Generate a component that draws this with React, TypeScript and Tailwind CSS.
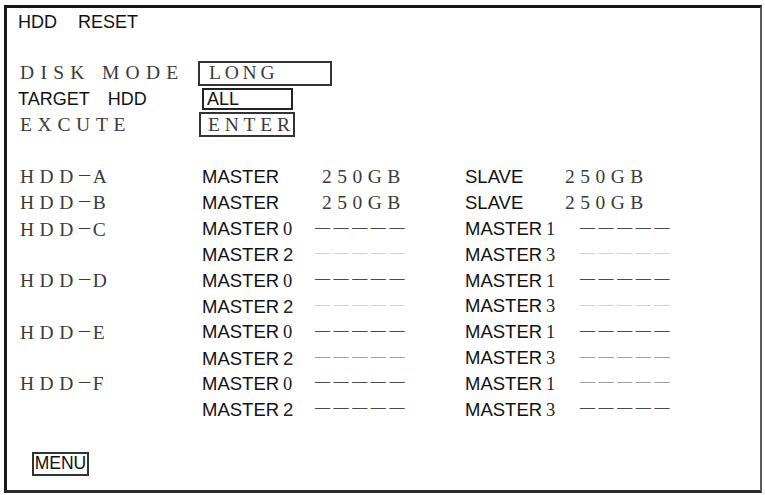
import { clsx } from "clsx";

const SANS = "font-['Liberation_Sans',Arial,sans-serif]";
const SERIF = "font-['Liberation_Serif','Times_New_Roman',serif]";

type Tone = "dark" | "mid" | "light";

const TONES: Record<Tone, string> = {
  dark: "text-[#4a4a4a]",
  mid: "text-[#a0a0a0]",
  light: "text-[#d2d2d2]",
};

type Row = {
  hdd?: string;
  a: string;
  aNum?: string;
  aVal?: string;
  aTone?: Tone;
  b: string;
  bNum?: string;
  bVal?: string;
  bTone?: Tone;
};

const ROWS: Row[] = [
  { hdd: "A", a: "MASTER", aVal: "250GB", b: "SLAVE", bVal: "250GB" },
  { hdd: "B", a: "MASTER", aVal: "250GB", b: "SLAVE", bVal: "250GB" },
  { hdd: "C", a: "MASTER", aNum: "0", aTone: "dark", b: "MASTER", bNum: "1", bTone: "dark" },
  { a: "MASTER", aNum: "2", aTone: "light", b: "MASTER", bNum: "3", bTone: "light" },
  { hdd: "D", a: "MASTER", aNum: "0", aTone: "dark", b: "MASTER", bNum: "1", bTone: "dark" },
  { a: "MASTER", aNum: "2", aTone: "light", b: "MASTER", bNum: "3", bTone: "light" },
  { hdd: "E", a: "MASTER", aNum: "0", aTone: "dark", b: "MASTER", bNum: "1", bTone: "dark" },
  { a: "MASTER", aNum: "2", aTone: "mid", b: "MASTER", bNum: "3", bTone: "mid" },
  { hdd: "F", a: "MASTER", aNum: "0", aTone: "dark", b: "MASTER", bNum: "1", bTone: "mid" },
  { a: "MASTER", aNum: "2", aTone: "dark", b: "MASTER", bNum: "3", bTone: "dark" },
];

function Serif({ children, className }: { children: React.ReactNode; className?: string }) {
  return (
    <span className={clsx(SERIF, "text-[19.5px] text-[#3a3a3a]", className)}>
      {children}
    </span>
  );
}

function Dashes({ tone }: { tone: Tone }) {
  return (
    <span
      className={clsx(
        SERIF,
        "inline-block -translate-y-[3px] text-[15px] font-bold tracking-[3.6px]",
        TONES[tone],
      )}
    >
      —————
    </span>
  );
}

function DriveName({ letter }: { letter: string }) {
  return (
    <Serif className="tracking-[5.5px]">
      HDD<span className="inline-block -translate-y-[1px] scale-x-125 tracking-normal">−</span>
      <span className="ml-[3px]">{letter}</span>
    </Serif>
  );
}

function Label({ name, num }: { name: string; num?: string }) {
  return (
    <span className="whitespace-nowrap">
      {name}
      {num && (
        <span className={clsx(num === "2" ? SANS : SERIF, "ml-[4px] text-[18.5px] text-[#222]")}>
          {num}
        </span>
      )}
    </span>
  );
}

function Value({ val, tone, dashOffset, valOffset }: { val?: string; tone?: Tone; dashOffset: string; valOffset: string }) {
  if (val) {
    return (
      <span className={valOffset}>
        <Serif className="tracking-[5.5px]">{val}</Serif>
      </span>
    );
  }
  return (
    <span className={dashOffset}>
      <Dashes tone={tone ?? "dark"} />
    </span>
  );
}

export default function App() {
  return (
    <div className={clsx(SANS, "h-[495px] w-[765px] bg-white pl-[4px] pt-[5px] text-[#111]")}>
      <div className="h-[488px] w-[758px] border-t-[3px] border-b-[3px] border-l-[3px] border-r-2 border-t-[#151515] border-b-[#2a2a2a] border-l-[#1a1a1a] border-r-[#5a5a5a] pl-[11px]">
        {/* title */}
        <div className="mt-[2px] h-[24px] text-[18px] leading-[24px]">
          HDD<span className="ml-[21px]">RESET</span>
        </div>

        {/* settings */}
        <div className="mt-[26px] flex flex-col">
          <div className="flex h-[26px] items-center leading-[26px]">
            <div className="w-[180px] pl-[2px]">
              <Serif className="tracking-[6.3px]">DISK MODE</Serif>
            </div>
            <div className="flex h-[25px] w-[134px] items-center border-2 border-[#333] pl-[9px]">
              <Serif className="tracking-[3.8px]">LONG</Serif>
            </div>
          </div>
          <div className="mt-[1px] flex h-[24px] items-center text-[18px] leading-[24px]">
            <div className="w-[180px]">
              TARGET<span className="ml-[18px]">HDD</span>
            </div>
            <div className="ml-[4px] flex h-[22px] w-[91px] items-center border-2 border-[#222] pl-[3px] leading-none">
              ALL
            </div>
          </div>
          <div className="flex h-[27px] items-center leading-[27px]">
            <div className="w-[180px] pl-[2px]">
              <Serif className="tracking-[5.7px]">EXCUTE</Serif>
            </div>
            <div className="ml-[1px] flex h-[25px] w-[96px] items-center border-2 border-[#333] pl-[7px]">
              <Serif className="tracking-[4.8px]">ENTER</Serif>
            </div>
          </div>
        </div>

        {/* drives */}
        <div className="mt-[26px] flex flex-col">
          {ROWS.map((r, i) => (
            <div
              key={i}
              className="grid h-[25.8px] grid-cols-[184px_113px_150px_100px_1fr] items-center text-[18.5px] leading-[25.8px]"
            >
              <div className="pl-[2px]">{r.hdd && <DriveName letter={r.hdd} />}</div>
              <div>
                <Label name={r.a} num={r.aNum} />
              </div>
              <div>
                <Value val={r.aVal} tone={r.aTone} dashOffset="ml-0" valOffset="ml-[7px]" />
              </div>
              <div>
                <Label name={r.b} num={r.bNum} />
              </div>
              <div>
                <Value val={r.bVal} tone={r.bTone} dashOffset="ml-[15px]" valOffset="ml-0" />
              </div>
            </div>
          ))}
        </div>

        {/* menu */}
        <div className="ml-[14px] mt-[30px] flex h-[24px] w-[57px] items-center justify-center border-2 border-[#333] text-[17.5px] leading-none">
          MENU
        </div>
      </div>
    </div>
  );
}
